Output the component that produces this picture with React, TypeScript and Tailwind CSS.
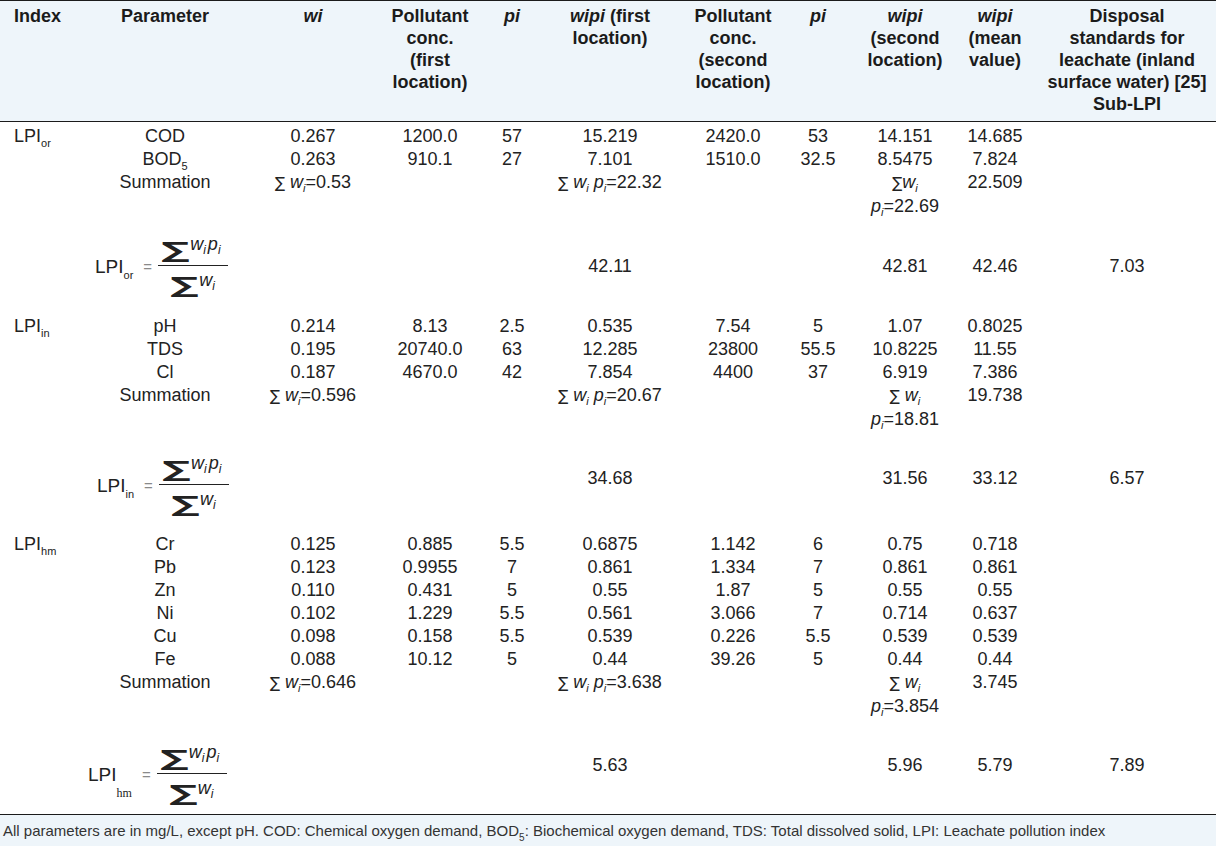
import React from 'react';

type Cell = React.ReactNode;

// subscript used for index names and BOD5
function Sub({ children }: { children: React.ReactNode }) {
  return <span className="relative top-[5px] text-[11px] leading-none">{children}</span>;
}

function I({ children }: { children: React.ReactNode }) {
  return <span className="italic">{children}</span>;
}

function Wi() {
  return (
    <>
      <I>w</I>
      <span className="relative top-[4px] text-[11px] italic leading-none">i</span>
    </>
  );
}

function Pi() {
  return (
    <>
      <I>p</I>
      <span className="relative top-[4px] text-[11px] italic leading-none">i</span>
    </>
  );
}

function Sigma() {
  return <span className='font-["DejaVu_Sans",sans-serif] text-[15px]'>∑</span>;
}

// wide, flat summation sign of the formula picture
function BigSigma() {
  return (
    <span className="mr-[9px] inline-block origin-top-left scale-x-[1.4] scale-y-[0.8] font-['DejaVu_Sans',sans-serif] text-[28px] font-bold leading-none">
      ∑
    </span>
  );
}

function Formula({ sub, hm }: { sub: string; hm?: boolean }) {
  return (
    <div className="flex items-center">
      <span className="text-[19px] leading-none">
        LPI
        {hm ? (
          <span className="relative top-[16px] font-['Liberation_Serif',serif] text-[12px]">{sub}</span>
        ) : (
          <span className="relative top-[6px] text-[11px]">{sub}</span>
        )}
      </span>
      <span className="ml-[10px] mr-[6px] text-[15px] leading-none text-[#8a8a8a]">=</span>
      <span className="inline-flex flex-col">
        <span className="flex h-[30px] items-start pl-[3px]">
          <span className="mt-[5px]">
            <BigSigma />
          </span>
          <span className="text-[18px] italic leading-none">
            w<span className="relative top-[4px] text-[12px]">i</span>
            <span className="ml-[2px]">p</span>
            <span className="relative top-[4px] text-[12px]">i</span>
          </span>
        </span>
        <span className="h-[1.5px] w-[70px] bg-[#222]" />
        <span className="flex h-[32px] items-start pl-[12px]">
          <span className="mt-[9px]">
            <BigSigma />
          </span>
          <span className="mt-[5px] text-[18px] italic leading-none">
            w<span className="relative top-[4px] text-[12px]">i</span>
          </span>
        </span>
      </span>
    </div>
  );
}

const orRows: Cell[][] = [
  [<>LPI<Sub>or</Sub></>, 'COD', '0.267', '1200.0', '57', '15.219', '2420.0', '53', '14.151', '14.685', ''],
  ['', <>BOD<Sub>5</Sub></>, '0.263', '910.1', '27', '7.101', '1510.0', '32.5', '8.5475', '7.824', ''],
  [
    '',
    'Summation',
    <><Sigma /> <Wi />=0.53</>,
    '',
    '',
    <><Sigma /> <Wi /> <Pi />=22.32</>,
    '',
    '',
    <><Sigma /><Wi /><br /><Pi />=22.69</>,
    '22.509',
    '',
  ],
];

const inRows: Cell[][] = [
  [<>LPI<Sub>in</Sub></>, 'pH', '0.214', '8.13', '2.5', '0.535', '7.54', '5', '1.07', '0.8025', ''],
  ['', 'TDS', '0.195', '20740.0', '63', '12.285', '23800', '55.5', '10.8225', '11.55', ''],
  ['', 'Cl', '0.187', '4670.0', '42', '7.854', '4400', '37', '6.919', '7.386', ''],
  [
    '',
    'Summation',
    <><Sigma /> <Wi />=0.596</>,
    '',
    '',
    <><Sigma /> <Wi /> <Pi />=20.67</>,
    '',
    '',
    <><Sigma /> <Wi /><br /><Pi />=18.81</>,
    '19.738',
    '',
  ],
];

const hmRows: Cell[][] = [
  [<>LPI<Sub>hm</Sub></>, 'Cr', '0.125', '0.885', '5.5', '0.6875', '1.142', '6', '0.75', '0.718', ''],
  ['', 'Pb', '0.123', '0.9955', '7', '0.861', '1.334', '7', '0.861', '0.861', ''],
  ['', 'Zn', '0.110', '0.431', '5', '0.55', '1.87', '5', '0.55', '0.55', ''],
  ['', 'Ni', '0.102', '1.229', '5.5', '0.561', '3.066', '7', '0.714', '0.637', ''],
  ['', 'Cu', '0.098', '0.158', '5.5', '0.539', '0.226', '5.5', '0.539', '0.539', ''],
  ['', 'Fe', '0.088', '10.12', '5', '0.44', '39.26', '5', '0.44', '0.44', ''],
  [
    '',
    'Summation',
    <><Sigma /> <Wi />=0.646</>,
    '',
    '',
    <><Sigma /> <Wi /> <Pi />=3.638</>,
    '',
    '',
    <><Sigma /> <Wi /><br /><Pi />=3.854</>,
    '3.745',
    '',
  ],
];

function DataRows({ rows, first }: { rows: Cell[][]; first?: boolean }) {
  return (
    <>
      {rows.map((r, ri) => (
        <tr key={ri} className="align-top">
          {r.map((c, ci) => (
            <td
              key={ci}
              className={
                (ci === 0 ? 'pl-[14px] text-left ' : 'text-center ') +
                (first && ri === 0 ? 'pt-[3px] ' : '') +
                'whitespace-nowrap leading-[23px]'
              }
            >
              {c}
            </td>
          ))}
        </tr>
      ))}
    </>
  );
}

function FormulaRow({
  sub,
  values,
  rowClass,
  formulaClass,
  valueClass,
  hm,
}: {
  sub: string;
  values: string[];
  rowClass: string;
  formulaClass: string;
  valueClass: string;
  hm?: boolean;
}) {
  return (
    <tr className={rowClass}>
      <td colSpan={2} className={formulaClass}>
        <Formula sub={sub} hm={hm} />
      </td>
      <td />
      <td />
      <td />
      <td className={valueClass}>{values[0]}</td>
      <td />
      <td />
      <td className={valueClass}>{values[1]}</td>
      <td className={valueClass}>{values[2]}</td>
      <td className={valueClass}>{values[3]}</td>
    </tr>
  );
}

export default function App() {
  return (
    <div className="w-[1216px] bg-white font-['Liberation_Sans',Arial,sans-serif] text-[#222]">
      <table className="w-full table-fixed border-collapse text-[18px]">
        <colgroup>
          <col className="w-[72px]" />
          <col className="w-[186px]" />
          <col className="w-[110px]" />
          <col className="w-[124px]" />
          <col className="w-[40px]" />
          <col className="w-[156px]" />
          <col className="w-[90px]" />
          <col className="w-[80px]" />
          <col className="w-[94px]" />
          <col className="w-[86px]" />
          <col className="w-[178px]" />
        </colgroup>
        <thead>
          <tr className="h-[121px] border-y border-[#1b1b1b] bg-[#eef5fa] align-top font-bold leading-[22px] text-[#1b1b1b]">
            <th className="whitespace-nowrap pl-[14px] pt-[4px] text-left">Index</th>
            <th className="whitespace-nowrap pt-[4px] text-center">Parameter</th>
            <th className="whitespace-nowrap pt-[4px] text-center italic">wi</th>
            <th className="whitespace-nowrap pt-[4px] text-center">Pollutant<br />conc.<br />(first<br />location)</th>
            <th className="whitespace-nowrap pt-[4px] text-center italic">pi</th>
            <th className="whitespace-nowrap pt-[4px] text-center"><I>wipi</I> (first<br />location)</th>
            <th className="whitespace-nowrap pt-[4px] text-center">Pollutant<br />conc.<br />(second<br />location)</th>
            <th className="whitespace-nowrap pt-[4px] text-center italic">pi</th>
            <th className="whitespace-nowrap pt-[4px] text-center"><I>wipi</I><br />(second<br />location)</th>
            <th className="whitespace-nowrap pt-[4px] text-center"><I>wipi</I><br />(mean<br />value)</th>
            <th className="whitespace-nowrap pt-[4px] text-center">Disposal<br />standards for<br />leachate (inland<br />surface water) [25]<br />Sub-LPI</th>
          </tr>
        </thead>
        <tbody>
          <DataRows rows={orRows} first />
          <FormulaRow
            sub="or"
            values={['42.11', '42.81', '42.46', '7.03']}
            rowClass="h-[97px] align-middle"
            formulaClass="pl-[95px]"
            valueClass="text-center"
          />
          <DataRows rows={inRows} />
          <FormulaRow
            sub="in"
            values={['34.68', '31.56', '33.12', '6.57']}
            rowClass="h-[102px] align-middle"
            formulaClass="pl-[97px] pt-[7px]"
            valueClass="pb-[7px] text-center"
          />
          <DataRows rows={hmRows} />
          <FormulaRow
            sub="hm"
            hm
            values={['5.63', '5.96', '5.79', '7.89']}
            rowClass="h-[96px] align-middle border-b border-[#1b1b1b]"
            formulaClass="pl-[88px] pt-[17px]"
            valueClass="text-center"
          />
        </tbody>
      </table>
      <div className="flex h-[34px] items-center bg-[#eef5fa] pl-[3px] font-['Liberation_Sans_Narrow','Liberation_Sans',sans-serif] text-[15px] text-[#333]">
        <span>
          All parameters are in mg/L, except pH. COD: Chemical oxygen demand, BOD
          <span className="relative top-[5px] text-[10px]">5</span>: Biochemical oxygen demand, TDS: Total dissolved solid, LPI:
          Leachate pollution index
        </span>
      </div>
    </div>
  );
}
